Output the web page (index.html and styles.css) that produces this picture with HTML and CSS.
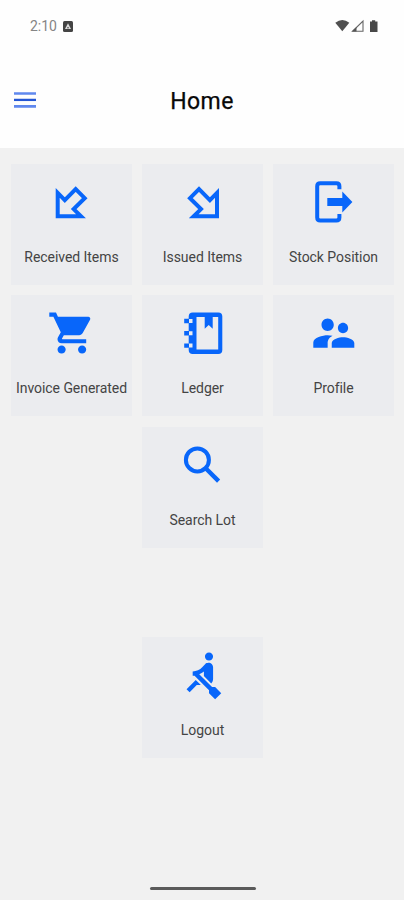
FILE: index.html
```html
<!DOCTYPE html>
<html lang="en">
<head>
<meta charset="utf-8">
<title>Home</title>
<link rel="stylesheet" href="styles.css">
</head>
<body>
<div class="screen">
  <header class="header">
    <div class="status">
      <div class="status-left">
        <span class="time">2:10</span>
        <svg class="badge" width="10" height="11" viewBox="0 0 10 11"><rect width="10" height="11" rx="1.5" fill="#444"/><path d="M5 2.3 8 8H2Z" fill="#ddd"/><path d="M4 6.8h2" stroke="#555"/></svg>
      </div>
      <svg width="44" height="14" viewBox="0 0 44 14">
        <path d="M0.3 3.7Q7.3-1.7 14.3 3.7L7.3 12.3Z" fill="#505050"/>
        <path d="M17.5 12.3H28V2Z" fill="none" stroke="#666" stroke-width="1.1"/>
        <path d="M17 12.6 21.5 8V12.6Z" fill="#555"/>
        <path d="M37 1.2h3.2v1.3H42.5V13H35V2.5H37Z" fill="#484848"/>
      </svg>
    </div>
    <div class="bar">
      <svg width="22" height="16" viewBox="0 0 22 16"><path d="M0 1.5h22M0 14.3h22" stroke="#6088ee" stroke-width="2.7"/><path d="M0 7.9h22" stroke="#2456d4" stroke-width="2.3"/></svg>
      <h1 class="title">Home</h1>
    </div>
  </header>
  <main class="grid">
    <a class="card">
      <svg class="icon" viewBox="0 0 61 61"><path class="line" d="M16.7 20.9V44.2H40L32.7 37.1L43.7 26.2L34.7 17.2L23.8 28.2Z"/></svg>
      <span>Received Items</span>
    </a>
    <a class="card">
      <svg class="icon" viewBox="0 0 61 61"><path class="line" transform="translate(61.7 0) scale(-1 1)" d="M16.7 20.9V44.2H40L32.7 37.1L43.7 26.2L34.7 17.2L23.8 28.2Z"/></svg>
      <span>Issued Items</span>
    </a>
    <a class="card">
      <svg class="icon" viewBox="0 0 61 61"><path class="line" d="M36.4 17.3V14.2Q36.4 11.2 33.4 11.2H17.2Q14.2 11.2 14.2 14.2V45.4Q14.2 48.4 17.2 48.4H33.4Q36.4 48.4 36.4 45.4V42"/><path d="M24.3 26H39.3V19.6L49.4 30L39.3 40.4V34H24.3Z"/></svg>
      <span>Stock Position</span>
    </a>
    <a class="card">
      <svg class="icon" viewBox="0 0 61 61"><path transform="translate(6.25 5.5) scale(2.05)" d="M7 18c-1.1 0-1.99.9-1.99 2S5.9 22 7 22s2-.9 2-2-.9-2-2-2zM1 2v2h2l3.6 7.59-1.35 2.45c-.16.28-.25.61-.25.96 0 1.1.9 2 2 2h12v-2H7.42c-.14 0-.25-.11-.25-.25l.03-.12.9-1.63h7.45c.75 0 1.41-.41 1.75-1.03l3.58-6.49A1.003 1.003 0 0 0 20 4H5.21l-.94-2H1zm16 16c-1.1 0-1.99.9-1.99 2s.89 2 1.99 2 2-.9 2-2-.9-2-2-2z"/></svg>
      <span>Invoice Generated</span>
    </a>
    <a class="card">
      <svg class="icon" viewBox="0 0 61 61"><path fill-rule="evenodd" d="M20.7 9.6H46.3Q50.3 9.6 50.3 13.6V47Q50.3 51 46.3 51H20.7Q16.7 51 16.7 47V13.6Q16.7 9.6 20.7 9.6ZM24.5 13.9V46.5H46.2V13.9H40.7V25.8L36.7 22L32.7 25.8V13.9ZM16.7 16V20H20.5V16ZM16.7 28.3V32.3H20.5V28.3ZM16.7 40.6V44.6H20.5V40.6Z"/><path d="M12.2 15.8h4.8v4.4h-4.8zM12.2 28.1h4.8v4.4h-4.8zM12.2 40.4h4.8v4.4h-4.8z"/></svg>
      <span>Ledger</span>
    </a>
    <a class="card">
      <svg class="icon" viewBox="0 0 61 61"><path transform="translate(6.2 5.2) scale(2.05 2.08)" d="M16.5 12c1.38 0 2.49-1.12 2.49-2.5S17.88 7 16.5 7 14 8.12 14 9.5s1.12 2.5 2.5 2.5zM9 11c1.66 0 2.99-1.34 2.99-3S10.66 5 9 5 6 6.34 6 8s1.34 3 3 3zm7.5 3c-1.83 0-5.5.92-5.5 2.75V19h11v-2.25c0-1.83-3.67-2.75-5.5-2.75zM9 13c-2.33 0-7 1.17-7 3.5V19h7v-2.25c0-.85.33-2.34 2.37-3.47C10.5 13.1 9.66 13 9 13z"/></svg>
      <span>Profile</span>
    </a>
    <a class="card center">
      <svg class="icon" viewBox="0 0 61 61"><circle class="line" cx="25.4" cy="24.9" r="11.5"/><path class="line handle" d="M34.2 33.7L46.6 46.1"/></svg>
      <span>Search Lot</span>
    </a>
    <a class="card center logout">
      <svg class="icon" viewBox="0 0 61 61"><path transform="translate(6.4 5.4) scale(2.04)" d="M8.5 14.5L4 19l1.5 1.5L9 17h2l-2.5-2.5zM15 1c-1.1 0-2 .9-2 2s.9 2 2 2 2-.9 2-2-.9-2-2-2zm6 20.01L18 24l-2.99-3.01V19.5l-7.1-7.09c-.31.05-.61.07-.91.07v-2.16c1.66.03 3.61-.87 4.67-2.04l1.4-1.55c.19-.21.43-.38.69-.5.29-.14.62-.23.96-.23h.03C15.99 6.01 17 7.02 17 8.26v5.75c0 .84-.35 1.61-.92 2.16l-3.58-3.58v-2.27c-.63.52-1.43 1.02-2.29 1.39L16.5 18H18l3 3.01z"/></svg>
      <span>Logout</span>
    </a>
  </main>
  <div class="home-indicator"></div>
</div>
</body>
</html>
```
FILE: styles.css
```css
* { box-sizing: border-box; }
body { margin: 0; font-family: Roboto, "Liberation Sans", sans-serif; }
.screen { height: 900px; display: flex; flex-direction: column; background: #f1f1f1; overflow: hidden; }
.header { height: 148px; background: #fefefe; flex: none; }
.status { display: flex; justify-content: space-between; align-items: center; height: 52px; padding: 0 25.5px 0 30px; }
.status-left { display: flex; align-items: center; gap: 6.5px; }
.time { font-size: 14px; line-height: 16px; color: #858585; letter-spacing: -0.05px; }
.bar { display: grid; grid-template-columns: 22px 1fr 22px; align-items: center; height: 96px; padding: 0 14px; }
.title { margin: 3px 0 0; text-align: center; font-size: 23px; line-height: 28px; font-weight: 400; color: #080808; letter-spacing: 0.4px; -webkit-text-stroke: 0.25px #080808; }
.grid { display: grid; grid-template-columns: repeat(3, 121px); column-gap: 10px; row-gap: 10.4px; padding: 16px 0 0 11px; }
.card { height: 121px; display: flex; flex-direction: column; align-items: center; padding-top: 8px; background: #ebecef; color: #444; font-size: 14px; line-height: 18px; letter-spacing: -0.05px; white-space: nowrap; }
.card span { margin-top: 15px; }
.center { grid-column: 2; }
.logout { margin-top: 78.5px; }
.icon { width: 61px; height: 61px; flex: none; fill: #0866fa; }
.line { fill: none; stroke: #0866fa; stroke-width: 4; }
.handle { stroke-width: 4.4; }
.home-indicator { width: 106px; height: 3px; margin: auto auto 10px 150px; border-radius: 2px; background: #5a5a5a; }
```
